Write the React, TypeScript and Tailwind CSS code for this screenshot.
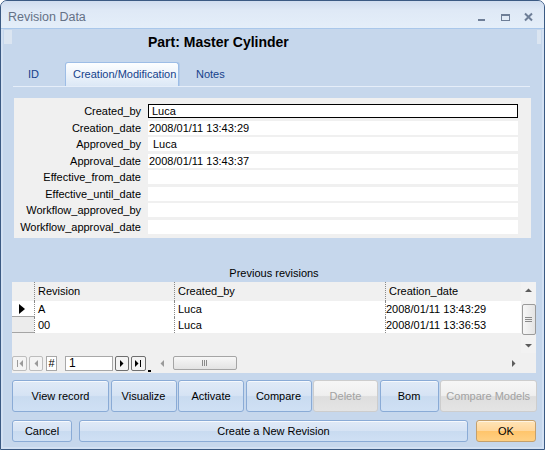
import React from "react";

type BtnKind = "normal" | "disabled" | "ok";

function Btn({ label, w, kind = "normal" }: { label: string; w: string; kind?: BtnKind }) {
  const styles: Record<BtnKind, string> = {
    normal:
      "border-[#8aabd6] bg-[linear-gradient(to_bottom,#e0eaf7_0%,#d6e3f4_48%,#c9dbf0_52%,#cfe0f4_100%)] text-black shadow-[inset_0_1px_0_rgba(255,255,255,0.7)]",
    disabled:
      "border-[#cdcdcd] bg-[linear-gradient(to_bottom,#f6f6f6_0%,#efefef_48%,#dedede_52%,#e4e4e4_100%)] text-[#a2a2a2]",
    ok: "border-[#c4a06c] bg-[linear-gradient(to_bottom,#ffe4b8_0%,#ffd79c_48%,#ffc56c_52%,#ffd083_100%)] text-black shadow-[inset_0_1px_0_rgba(255,255,255,0.6)]",
  };
  return (
    <div
      className={`h-full shrink-0 flex items-center justify-center rounded-[3px] border text-[11px] leading-none ${styles[kind]} ${w}`}
    >
      {label}
    </div>
  );
}

function Tri({ dir, color }: { dir: "left" | "right" | "up" | "down"; color: string }) {
  const pts: Record<string, string> = {
    left: "4,0 4,7 0.5,3.5",
    right: "0,0 0,7 3.5,3.5",
    up: "0,4 7,4 3.5,0.5",
    down: "0,0 7,0 3.5,3.5",
  };
  const vertical = dir === "up" || dir === "down";
  return (
    <svg width={vertical ? 7 : 4} height={vertical ? 4 : 7} viewBox={vertical ? "0 0 7 4" : "0 0 4 7"}>
      <polygon points={pts[dir]} fill={color} />
    </svg>
  );
}

function NavBtn({ children, on, w }: { children: React.ReactNode; on: boolean; w: string }) {
  return (
    <div
      className={`h-[15px] ${w} shrink-0 flex items-center justify-center gap-[1px] rounded-[2px] border ${
        on ? "border-[#6f6f6f] bg-[#f4f4f4]" : "border-[#bdbdbd] bg-[#f4f4f4]"
      }`}
    >
      {children}
    </div>
  );
}

const fields: { label: string; value: string; pad: string; focus?: boolean }[] = [
  { label: "Created_by", value: "Luca", pad: "pl-[3px]", focus: true },
  { label: "Creation_date", value: "2008/01/11 13:43:29", pad: "pl-[1px]" },
  { label: "Approved_by", value: "Luca", pad: "pl-[5px]" },
  { label: "Approval_date", value: "2008/01/11 13:43:37", pad: "pl-[1px]" },
  { label: "Effective_from_date", value: "", pad: "pl-[1px]" },
  { label: "Effective_until_date", value: "", pad: "pl-[1px]" },
  { label: "Workflow_approved_by", value: "", pad: "pl-[1px]" },
  { label: "Workflow_approval_date", value: "", pad: "pl-[1px]" },
];

const revisions = [
  { rev: "A", by: "Luca", date: "2008/01/11 13:43:29", current: true },
  { rev: "00", by: "Luca", date: "2008/01/11 13:36:53", current: false },
];

export default function App() {
  return (
    <div className="w-[545px] h-[450px] bg-white">
      <div className="w-full h-full flex flex-col border border-[#3b5a83] rounded-t-[7px] overflow-hidden bg-[#c6d7ec] font-['Liberation_Sans',Arial,sans-serif] text-[11px] text-black">
        {/* title bar */}
        <div className="h-[28px] shrink-0 flex items-start border-b border-[#a9c7ea] bg-[linear-gradient(to_bottom,#d0ddef_0%,#dfe9f6_35%,#e4eef9_100%)] pl-[7px]">
          <span className="mt-[9px] text-[12.5px] leading-[14px] text-[#657186]">Revision Data</span>
          <svg className="ml-auto mr-[7px] mt-[11px]" width="62" height="10" viewBox="0 0 62 10">
            <rect x="3" y="7" width="7" height="2" fill="#6e7e97" />
            <rect x="26" y="2" width="9" height="2" fill="#6e7e97" />
            <rect x="26.5" y="2.5" width="8" height="6" fill="none" stroke="#6e7e97" strokeWidth="1" />
            <path d="M50 1.5 L57 8.5 M57 1.5 L50 8.5" stroke="#6e7e97" strokeWidth="2" />
          </svg>
        </div>

        {/* body */}
        <div className="relative flex-1 flex flex-col border-x-2 border-b-2 border-[#d3e1f3] pl-[9px] pr-[6px]">
          <div className="absolute left-[1px] top-[1px] w-[8px] h-[14px] bg-[#dbe5f1]" />
          <div className="absolute right-[1px] top-[1px] w-[4px] h-[14px] bg-[#dbe5f1]" />

          {/* part heading */}
          <div className="h-[33px] shrink-0 pl-[136px] pt-[5px]">
            <span className="text-[14px] leading-[16px] font-bold">Part: Master Cylinder</span>
          </div>

          {/* tabs */}
          <div className="h-[25px] shrink-0 ml-[1px] mr-[6px] flex items-stretch border-b border-[#e6eef9] text-[#15428b]">
            <div className="w-[52px] pl-[15px] flex items-center">ID</div>
            <div className="w-[114px] pl-[7px] flex items-center rounded-t-[3px] border-x border-t border-[#9dbde6] bg-[linear-gradient(to_bottom,#fdfeff_0%,#eef4fb_45%,#dce8f6_100%)] shadow-[1px_0_0_#b3cbe9]">
              Creation/Modification
            </div>
            <div className="pl-[17px] flex items-center">Notes</div>
          </div>

          {/* record fields */}
          <div className="mt-[11px] ml-[2px] mr-[5px] h-[140px] shrink-0 bg-[#f0f0f0] pt-[6px] flex flex-col gap-[2.57px]">
            {fields.map((f) => (
              <div key={f.label} className="flex items-center h-[14px]">
                <div className="w-[127px] text-right leading-[14px]">{f.label}</div>
                <div
                  className={`ml-[7px] w-[370px] h-[14px] bg-white leading-[12px] flex items-center ${f.pad} ${
                    f.focus ? "border border-black" : ""
                  }`}
                >
                  {f.value}
                </div>
              </div>
            ))}
          </div>

          {/* previous revisions */}
          <div className="mt-[29px] h-[13px] shrink-0 leading-[13px] text-center">Previous revisions</div>

          <div className="mt-[2px] h-[91px] shrink-0 flex flex-col bg-[#f0f0f0]">
            <div className="h-[71px] flex">
              <div className="w-[509px] flex flex-col">
                {/* header */}
                <div className="h-[19px] flex">
                  <div className="w-[22px]" />
                  <div className="w-[140px] border-l border-dotted border-[#8a8a8a] pl-[3px] flex items-center">Revision</div>
                  <div className="w-[211px] border-l border-dotted border-[#8a8a8a] pl-[3px] flex items-center">Created_by</div>
                  <div className="flex-1 border-l border-dotted border-[#8a8a8a] pl-[3px] flex items-center">Creation_date</div>
                </div>
                {revisions.map((r) => (
                  <div key={r.rev} className="h-[16px] flex">
                    <div
                      className={`w-[22px] flex items-center justify-center border-b border-[#a5a5a5] ${
                        r.current ? "bg-white" : "bg-[#ececec]"
                      }`}
                    >
                      {r.current && (
                        <svg width="6" height="10" viewBox="0 0 6 10" className="-ml-[2px]">
                          <polygon points="0,0 6,5 0,10" fill="#000" />
                        </svg>
                      )}
                    </div>
                    <div className="w-[140px] bg-white border-l border-dotted border-[#8a8a8a] pl-[3px] flex items-center">{r.rev}</div>
                    <div className="w-[211px] bg-white border-l border-dotted border-[#8a8a8a] pl-[3px] flex items-center">{r.by}</div>
                    <div className="flex-1 bg-white border-l border-dotted border-[#8a8a8a] flex items-center">{r.date}</div>
                  </div>
                ))}
              </div>

              {/* vertical scrollbar */}
              <div className="w-[15px] flex flex-col items-center bg-[#f2f2f2]">
                <div className="h-[15px] flex items-center justify-center">
                  <Tri dir="up" color="#5c5c5c" />
                </div>
                <div className="mt-[7px] w-[14px] h-[31px] rounded-[2px] border border-[#9a9a9a] bg-[linear-gradient(to_right,#f7f7f7,#e4e4e4)] flex flex-col items-center justify-center gap-[1px]">
                  <div className="w-[7px] h-[1px] bg-[#8a8a8a]" />
                  <div className="w-[7px] h-[1px] bg-[#8a8a8a]" />
                  <div className="w-[7px] h-[1px] bg-[#8a8a8a]" />
                </div>
                <div className="mt-auto h-[15px] flex items-center justify-center">
                  <Tri dir="down" color="#5c5c5c" />
                </div>
              </div>
            </div>

            {/* navigator + horizontal scrollbar */}
            <div className="h-[20px] flex items-center">
              <NavBtn on={false} w="w-[15px]">
                <div className="w-[1px] h-[7px] bg-[#9a9a9a]" />
                <Tri dir="left" color="#9a9a9a" />
              </NavBtn>
              <div className="ml-[2px]">
                <NavBtn on={false} w="w-[14px]">
                  <Tri dir="left" color="#9a9a9a" />
                </NavBtn>
              </div>
              <div className="ml-[3px] w-[11px] h-[15px] border border-[#a8a8a8] bg-white flex items-center justify-center text-[11px] leading-none">
                #
              </div>
              <div className="ml-[8px] w-[48px] h-[15px] border border-[#a8a8a8] bg-white pl-[3px] flex items-center text-[12px] leading-none">
                1
              </div>
              <div className="ml-[2px]">
                <NavBtn on w="w-[14px]">
                  <Tri dir="right" color="#000" />
                </NavBtn>
              </div>
              <div className="ml-[2px]">
                <NavBtn on w="w-[15px]">
                  <Tri dir="right" color="#000" />
                  <div className="w-[1px] h-[7px] bg-black" />
                </NavBtn>
              </div>
              <div className="ml-[2px] self-end mb-[1px] w-[3px] h-[2px] bg-black" />

              {/* horizontal scrollbar */}
              <div className="ml-[5px] w-[366px] h-[15px] flex items-center">
                <div className="w-[12px] flex items-center justify-center">
                  <Tri dir="left" color="#9a9a9a" />
                </div>
                <div className="ml-[5px] w-[64px] h-[14px] rounded-[2px] border border-[#a5a5a5] bg-[linear-gradient(to_bottom,#f7f7f7,#e3e3e3)] flex items-center justify-center gap-[1px]">
                  <div className="w-[1px] h-[6px] bg-[#8a8a8a]" />
                  <div className="w-[1px] h-[6px] bg-[#8a8a8a]" />
                  <div className="w-[1px] h-[6px] bg-[#8a8a8a]" />
                </div>
                <div className="ml-auto w-[15px] flex items-center justify-center">
                  <Tri dir="right" color="#5c5c5c" />
                </div>
              </div>
              <div className="ml-auto w-[15px] h-full bg-[#f0f0f0]" />
            </div>
          </div>

          {/* action buttons */}
          <div className="mt-[7px] h-[32px] shrink-0 flex gap-[1.5px]">
            <Btn label="View record" w="w-[97px]" />
            <Btn label="Visualize" w="w-[66px]" />
            <Btn label="Activate" w="w-[66px]" />
            <Btn label="Compare" w="w-[66px]" />
            <Btn label="Delete" w="w-[65px]" kind="disabled" />
            <Btn label="Bom" w="w-[59px]" />
            <Btn label="Compare Models" w="w-[96.5px]" kind="disabled" />
          </div>

          {/* dialog buttons */}
          <div className="mt-[8px] h-[22px] shrink-0 flex">
            <Btn label="Cancel" w="w-[60px]" />
            <div className="ml-[7px] h-full">
              <Btn label="Create a New Revision" w="w-[389px]" />
            </div>
            <div className="ml-[8px] h-full">
              <Btn label="OK" w="w-[60px]" kind="ok" />
            </div>
          </div>
        </div>
      </div>
    </div>
  );
}
